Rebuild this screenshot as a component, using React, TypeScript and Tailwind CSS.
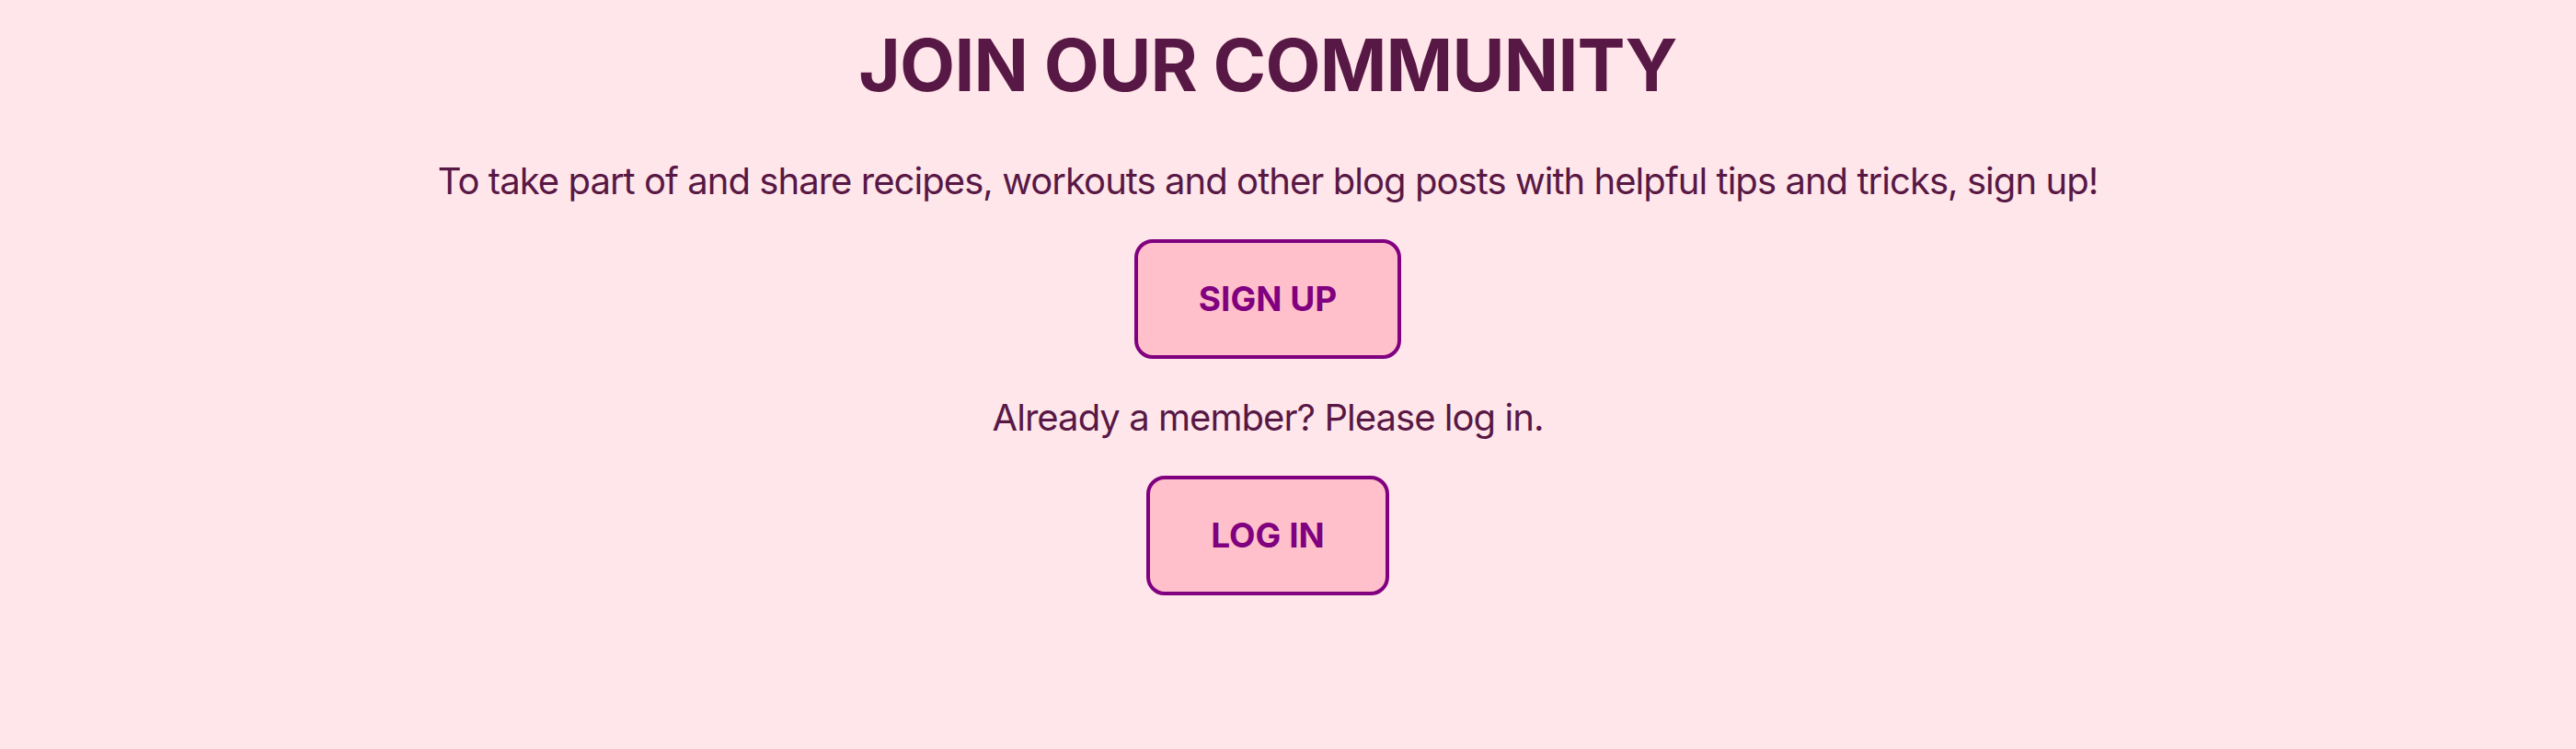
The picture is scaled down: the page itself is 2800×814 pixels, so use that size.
import React from 'react';

const JoinCommunity: React.FC = () => {
  return (
    <div className="min-h-screen w-full bg-[#ffe6ea] pr-[44px] font-['Inter','Noto_Sans',sans-serif] text-[#581845]">
      <div className="flex flex-col items-center">
        {/* Heading */}
        <h1 className="mt-[24px] text-[78px] font-bold leading-[94px] tracking-[-0.8px]">JOIN OUR COMMUNITY</h1>

        {/* Intro */}
        <p className="mt-[55px] text-[40px] leading-[48px] tracking-[-0.95px]">
          To take part of and share recipes, workouts and other blog posts with helpful tips and tricks, sign up!
        </p>

        <button className="mt-[39px] rounded-[20px] border-[4px] border-[#800080] bg-[#ffc0cb] px-[66px] py-[39px] text-[37px] font-bold leading-[44px] text-[#800080]">
          SIGN UP
        </button>

        <p className="mt-[40px] text-[40px] leading-[48px] tracking-[-0.95px]">Already a member? Please log in.</p>

        <button className="mt-[39px] rounded-[20px] border-[4px] border-[#800080] bg-[#ffc0cb] px-[66px] py-[39px] text-[37px] font-bold leading-[44px] text-[#800080]">
          LOG IN
        </button>
      </div>
    </div>
  );
};

export default function App() {
  return <JoinCommunity />;
}
